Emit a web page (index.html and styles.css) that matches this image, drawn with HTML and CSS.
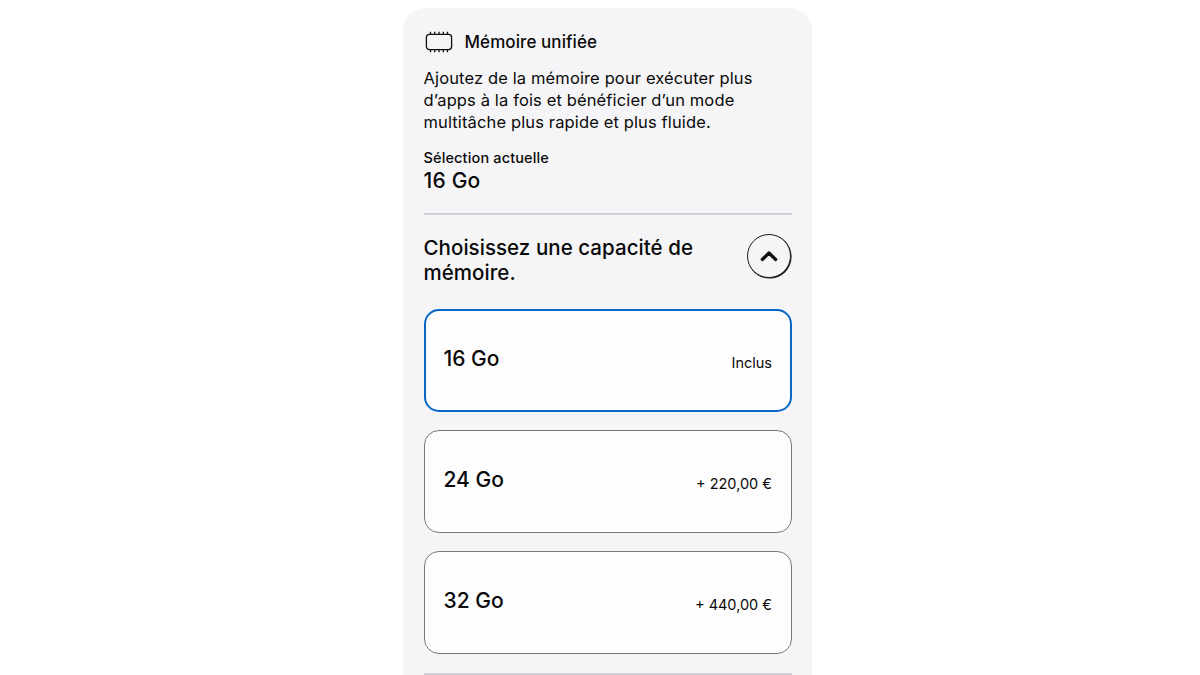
FILE: index.html
```html
<!DOCTYPE html>
<html lang="fr">
<head>
    <meta charset="UTF-8">
    <meta name="viewport" content="width=device-width, initial-scale=1.0">
    <title>Mémoire unifiée</title>
    <link rel="stylesheet" href="styles.css">
</head>
<body>
    <main class="card">
        <header class="card-header">
            <svg class="memory-icon" width="28" height="24" viewBox="0 0 28 24" fill="none" stroke="#111" stroke-width="1.3">
                <rect x="1.4" y="4.4" width="25.2" height="15.2" rx="3"/>
                <path d="M5.5 1.8v2.4M9.7 1.8v2.4M14 1.8v2.4M18.3 1.8v2.4M22.5 1.8v2.4M5.5 19.8v2.4M9.7 19.8v2.4M14 19.8v2.4M18.3 19.8v2.4M22.5 19.8v2.4"/>
            </svg>
            <h1>Mémoire unifiée</h1>
        </header>
        <p class="description">Ajoutez de la mémoire pour exécuter plus<br>d’apps à la fois et bénéficier d’un mode<br>multitâche plus rapide et plus fluide.</p>
        <div class="selection">
            <div class="selection-label">Sélection actuelle</div>
            <div class="selection-value">16 Go</div>
        </div>
        <div class="chooser">
            <h2>Choisissez une capacité de<br>mémoire.</h2>
            <button class="toggle" aria-label="Réduire">
                <svg width="18" height="12" viewBox="0 0 18 12" fill="none" stroke="#111" stroke-width="3.2" stroke-linecap="round" stroke-linejoin="round">
                    <path d="M2.3 9.5L9 3l6.7 6.5"/>
                </svg>
            </button>
        </div>
        <div class="options">
            <div class="option selected">
                <span class="size">16 Go</span>
                <span class="price">Inclus</span>
            </div>
            <div class="option">
                <span class="size">24 Go</span>
                <span class="price">+ 220,00 €</span>
            </div>
            <div class="option">
                <span class="size">32 Go</span>
                <span class="price">+ 440,00 €</span>
            </div>
        </div>
        <div class="next-section"></div>
    </main>
</body>
</html>
```
FILE: styles.css
```css
* {
    box-sizing: border-box;
}

body {
    margin: 0;
    height: 675px;
    padding-top: 8px;
    padding-left: 403px;
    background-color: #fff;
    color: #0a0a0a;
    font-family: Inter, "Liberation Sans", sans-serif;
    overflow: hidden;
}

h1,
h2,
p {
    margin: 0;
}

.card {
    width: 409px;
    height: 667px;
    padding: 22px 20px 0 20.5px;
    background-color: #f5f5f7;
    border-radius: 22px 22px 0 0;
}

.card-header {
    display: flex;
    align-items: center;
    gap: 11.5px;
    height: 24px;
    padding-left: 1.5px;
}

h1 {
    font-size: 17px;
    font-weight: 500;
    line-height: 24px;
    letter-spacing: 0.08px;
}

.description {
    margin-top: 13px;
    font-size: 16.5px;
    line-height: 22px;
    letter-spacing: 0.13px;
    white-space: nowrap;
}

.selection {
    height: 82px;
    padding-top: 15px;
    border-bottom: 2px solid #d2d2d6;
}

.selection-label {
    font-size: 14.5px;
    font-weight: 500;
    line-height: 20px;
    letter-spacing: 0.14px;
}

.selection-value {
    font-size: 21px;
    font-weight: 500;
    line-height: 26px;
    letter-spacing: 0.2px;
}

.chooser {
    display: flex;
    justify-content: space-between;
    align-items: flex-start;
    height: 94px;
    padding-top: 19px;
    padding-right: 1px;
}

h2 {
    padding-top: 1px;
    font-size: 20.5px;
    font-weight: 500;
    line-height: 25px;
    letter-spacing: 0.05px;
}

/* ring is slightly heavier towards the bottom right */
.toggle {
    display: flex;
    align-items: center;
    justify-content: center;
    width: 44px;
    height: 44px;
    padding: 0;
    border: 1px solid #222;
    border-radius: 50%;
    background-color: #f5f5f7;
    box-shadow: 0.6px 0.6px 0 #111;
}

.options {
    display: flex;
    flex-direction: column;
    gap: 18px;
}

.option {
    display: flex;
    align-items: center;
    justify-content: space-between;
    height: 103px;
    padding: 0 19px;
    border: 1px solid #77777b;
    border-radius: 15px;
    background-color: #fdfdfd;
}

.option.selected {
    padding: 0 18px;
    border: 2px solid #0b65c9;
}

.size {
    padding-bottom: 4px;
    font-size: 21px;
    font-weight: 500;
}

.price {
    padding-top: 4px;
    font-size: 14.5px;
}

.next-section {
    margin-top: 19px;
    border-top: 2px solid #d2d2d6;
}
```
